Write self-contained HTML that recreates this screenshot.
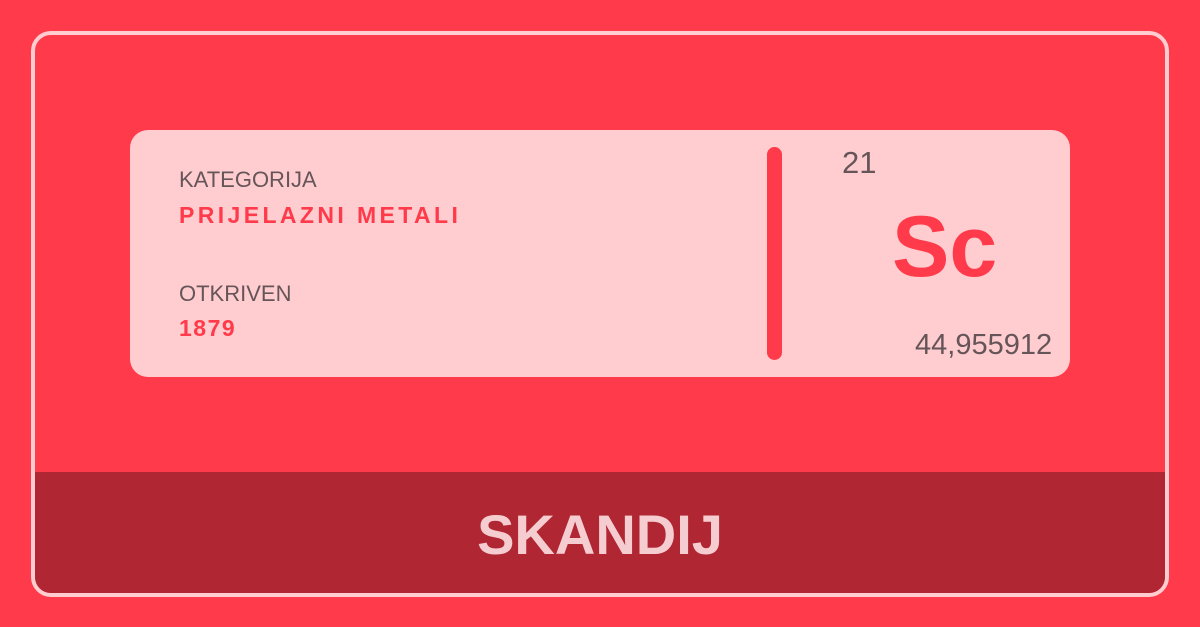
<!DOCTYPE html>
<html><head><meta charset="utf-8"><style>
*{margin:0;padding:0;box-sizing:border-box}
body{width:1200px;height:627px;background:#FF3A4A;position:relative;overflow:hidden;font-family:"Liberation Sans",sans-serif}
.outer{position:absolute;left:31px;top:31px;width:1138px;height:566px;border:4px solid #FFCDD0;border-radius:20px;overflow:hidden}
.band{position:absolute;left:0;right:0;top:437px;bottom:0;background:#B02633}
.band div{position:absolute;left:0;right:0;top:30px;text-align:center;color:#F5CDD0;font-weight:bold;font-size:56px}
.card{position:absolute;left:130px;top:130px;width:940px;height:247px;background:#FFCDD0;border-radius:18px}
.t{position:absolute;white-space:nowrap}
.lbl{color:#665558;font-size:22px}
.val{color:#FF3A4A;font-weight:bold;font-size:23px;letter-spacing:3.4px}
.bar{position:absolute;left:637px;top:17px;width:15px;height:213px;border-radius:8px;background:#FF3A4A}
</style></head><body>
<div class="outer"><div class="band"><div>SKANDIJ</div></div></div>
<div class="card">
<div class="t lbl" style="left:49px;top:37px">KATEGORIJA</div>
<div class="t val" style="left:49px;top:72px">PRIJELAZNI METALI</div>
<div class="t lbl" style="left:49px;top:151px">OTKRIVEN</div>
<div class="t val" style="left:49px;top:185px;letter-spacing:1.5px">1879</div>
<div class="bar"></div>
<div class="t" style="left:712px;top:15px;font-size:31px;color:#665558">21</div>
<div class="t" style="left:762px;top:68px;font-size:86px;font-weight:bold;color:#FF3A4A">Sc</div>
<div class="t" style="left:785px;top:199px;font-size:29px;color:#665558">44,955912</div>
</div>
</body></html>
